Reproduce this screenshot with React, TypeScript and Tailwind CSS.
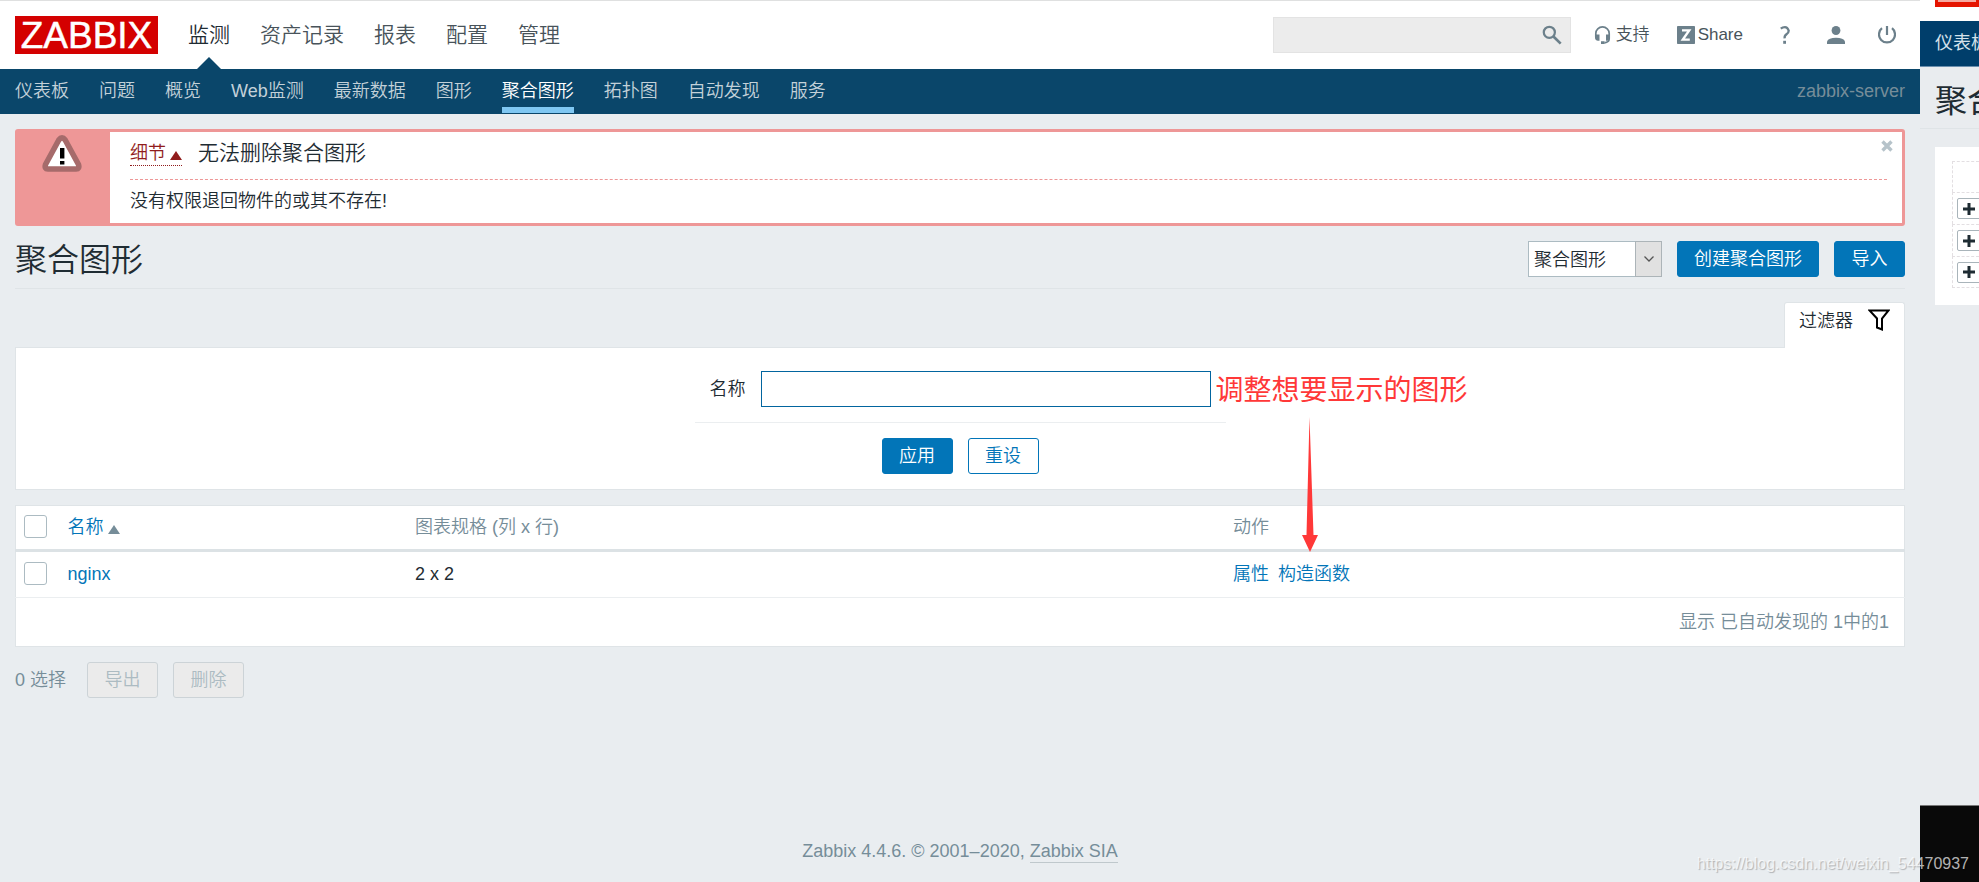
import type { ReactNode } from 'react';

const mainMenu = ['监测', '资产记录', '报表', '配置', '管理'];
const subMenu = ['仪表板', '问题', '概览', 'Web监测', '最新数据', '图形', '聚合图形', '拓扑图', '自动发现', '服务'];

function Primary({ children }: { children: ReactNode }) {
  return (
    <button className="h-9 min-w-[71px] rounded-[3px] border border-[#0275b8] bg-[#0275b8] px-4 text-white">{children}</button>
  );
}

function Icon({ children, size = 'size-[18px]' }: { children: ReactNode; size?: string }) {
  return (
    <svg viewBox="0 0 18 18" className={`${size} shrink-0`} fill="none" aria-hidden="true">
      {children}
    </svg>
  );
}

function Header() {
  return (
    <header>
      <div className="flex h-[69px] items-center border-t border-[#dfe0e0] bg-white pb-px pl-[15px] pr-6 text-[#48535a]">
        <a href="#" aria-label="ZABBIX" className="flex h-[38px] w-[143px] shrink-0 items-center justify-center bg-[#d40000]">
          <svg viewBox="0 0 143 38" className="h-[38px] w-[143px] overflow-visible" aria-hidden="true">
            <text x="71.5" y="32" textAnchor="middle" fontSize="37" fill="#fff" stroke="#fff" strokeWidth="0.5" fontFamily="Liberation Sans, sans-serif">ZABBIX</text>
          </svg>
        </a>
        <nav className="flex h-full gap-[30px] pl-[30px] text-[21px]">
          {mainMenu.map((m, i) => (
            <a key={m} href="#" className={i === 0 ? 'relative flex items-center text-[#1f2c33]' : 'flex items-center'}>
              {m}
              {i === 0 && (
                <span className="absolute -bottom-px left-1/2 -translate-x-1/2 border-x-[12px] border-b-[12px] border-x-transparent border-b-[#0a466a]" />
              )}
            </a>
          ))}
        </nav>
        <div className="ml-auto flex items-center text-[17px]">
          <div className="flex h-9 w-[298px] items-center border border-[#e3e3e3] bg-[#ececec] pr-2">
            <input aria-label="搜索" className="min-w-0 flex-1 bg-transparent px-2 outline-none" />
            <button aria-label="搜索">
              <Icon size="size-5">
                <circle cx="6.6" cy="6.6" r="5" stroke="#6c808b" strokeWidth="2" />
                <path d="m10.300 10.300 6.500 6.500" stroke="#6c808b" strokeWidth="2.400" />
              </Icon>
            </button>
          </div>
          <a href="#" className="ml-[23px] flex items-center gap-1">
            <Icon>
              <path d="M1.800 11V7.500a6.600 6.500 0 0 1 13.400 0V12.500q0 3.800-4.700 4.300" stroke="#6c808b" strokeWidth="1.700" />
              <path d="M1 8.500h4.500v6.200H4q-3-.4-3-3zM16 8.500h-4v6.200h1q3-.4 3-3zM7 15.200h3.600v2.800H7z" fill="#6c808b" />
            </Icon>
            支持
          </a>
          <a href="#" className="ml-[27px] flex items-center gap-[3px]">
            <Icon>
              <rect width="18" height="18" rx="0.800" fill="#6c808b" />
              <path d="M5 4.400h7.200L5.800 13.600h7" stroke="#fff" strokeWidth="2.400" />
            </Icon>
            Share
          </a>
          <a href="#" aria-label="帮助" className="ml-[33px]">
            <Icon>
              <path d="M4.800 2.600Q6.500 1.200 9 1.200t3.700 3.500Q12.700 6.800 10.500 8.300T8.600 12.300" stroke="#6c808b" strokeWidth="2.300" />
              <path d="M7.200 14.800h2.800v3H7.200z" fill="#6c808b" />
            </Icon>
          </a>
          <a href="#" aria-label="用户" className="ml-[33px]">
            <Icon>
              <ellipse cx="9" cy="4.500" rx="4.400" ry="4.500" fill="#6c808b" />
              <path d="M0 18v-2.500Q1.500 11.800 9 11.800t9 3.700V18z" fill="#6c808b" />
            </Icon>
          </a>
          <a href="#" aria-label="退出" className="ml-[33px]">
            <Icon>
              <path d="M9 0v9M4 2.200a8 8 0 1 0 10 0" stroke="#6c808b" strokeWidth="2.200" />
            </Icon>
          </a>
        </div>
      </div>
      <nav className="flex h-[45px] items-stretch gap-[30px] bg-[#0a466a] px-[15px] text-[#c3d1d9]">
        {subMenu.map((m) => (
          <a
            key={m}
            href="#"
            className={
              m === '聚合图形'
                ? 'mb-px flex items-center border-b-[6px] border-[#7fc7f2] pt-[6px] text-white'
                : 'flex items-center'
            }
          >
            {m}
          </a>
        ))}
        <span className="ml-auto flex items-center text-[#768d99]">zabbix-server</span>
      </nav>
    </header>
  );
}

function Message() {
  return (
    <section className="flex h-[97px] rounded-[3px] border-[3px] border-[#ee9797] bg-white">
      <div className="flex w-[92px] shrink-0 justify-center bg-[#ee9797] pr-1 pt-[3px]">
        <svg viewBox="0 0 40 37" className="h-[37px] w-10" aria-hidden="true">
          <path
            d="M16.800 5Q20 .8 23.200 5L36.500 29.500Q37.800 33.800 34 34H6Q2.200 33.800 3.500 29.500z"
            fill="#fff"
            stroke="#a66b6b"
            strokeWidth="5.600"
            strokeLinejoin="round"
          />
          <path d="M18 13h4.400v10.500H18zM18 26h4.400v3.500H18z" fill="#000" />
        </svg>
      </div>
      <div className="relative min-w-0 flex-1 px-5 pr-[15px]">
        <div className="flex h-12 items-center gap-4 border-b border-dashed border-[#ee9797] pb-[6px]">
          <button className="flex items-center gap-1 border-b border-dotted border-[#911c1c] pt-[2px] leading-[23px] text-[#911c1c]">
            细节
            <span className="mt-1 border-x-[6px] border-b-[9px] border-x-transparent border-b-[#911c1c]" />
          </button>
          <span className="text-[21px]">无法删除聚合图形</span>
        </div>
        <p className="pt-2">没有权限退回物件的或其不存在!</p>
        <button aria-label="关闭" className="absolute right-[9px] top-2">
          <svg viewBox="0 0 12 12" className="size-3" aria-hidden="true">
            <path d="m1.500 1.500 9 9m0-9-9 9" stroke="#b6c3ca" strokeWidth="3.400" />
          </svg>
        </button>
      </div>
    </section>
  );
}

function Check({ label }: { label: string }) {
  return (
    <input
      type="checkbox"
      aria-label={label}
      className="mb-[2px] block size-[23px] appearance-none rounded-[3px] border border-[#acbbc2] bg-white"
    />
  );
}

function NextWindow() {
  return (
    <aside className="flex w-[59px] shrink-0 flex-col overflow-hidden whitespace-nowrap bg-[#e9ecef]">
      <div className="h-[21px] bg-white pl-[15px]">
        <div className="h-[7px] bg-[#e51400] px-[3px]">
          <div className="h-0.5 bg-[#f5a9a0]" />
        </div>
      </div>
      <div className="flex h-[46px] items-center border-b border-[#6b8fae] bg-[#003e6b] pl-[15px] font-normal text-[#d5e1ea]">仪表板</div>
      <div className="flex h-[62px] items-center border-b border-[#dfe4e7] pl-[15px] pt-2 text-[32px] font-normal">聚合图形</div>
      <div className="ml-[15px] mt-[18px] h-[158px] bg-white pl-[17px] pt-[14px]">
        <div className="h-[31px] border-l border-t border-dashed border-[#e3dfe2]" />
        {[1, 2, 3].map((n) => (
          <div key={n} className="flex h-8 items-center border-l border-t border-dashed border-[#e3dfe2] pl-1 last:border-b">
            <button aria-label="添加" className="flex h-[21px] w-[26px] shrink-0 items-center rounded-[2px] border border-[#a9b4ba] bg-white pl-[5px]">
              <svg viewBox="0 0 12 12" className="size-3" aria-hidden="true">
                <path d="M6 0v12M0 6h12" stroke="#1f2c33" strokeWidth="3" />
              </svg>
            </button>
          </div>
        ))}
      </div>
      <div className="mt-auto h-[77px] border-t border-[#777] bg-[#090909]" />
    </aside>
  );
}

export default function App() {
  return (
    <div className="relative flex min-h-screen bg-[#e9edf0] font-['Liberation_Sans','Noto_Sans_CJK_SC',sans-serif] text-[18px] font-[350] leading-[27px] text-[#1f2c33]">
      <div className="flex min-w-0 flex-1 flex-col">
        <Header />
        <main className="px-[15px] pt-[15px]">
          <Message />
          <div className="flex h-[63px] items-center justify-between border-b border-[#dfe4e7] pb-1 pt-2">
            <h1 className="pt-[2px] text-[32px] font-[350]">聚合图形</h1>
            <div className="flex gap-[15px]">
              <div className="relative">
                <select aria-label="视图" className="h-9 w-[134px] appearance-none border border-[#acbbc2] bg-white pl-[5px] pt-[3px]">
                  <option>聚合图形</option>
                </select>
                <span className="pointer-events-none absolute inset-y-0 right-0 flex w-[27px] items-center justify-center border border-[#acb4b8] bg-[#e1e1e1]">
                  <svg viewBox="0 0 10 6" className="h-[6px] w-[10px]" fill="none" aria-hidden="true">
                    <path d="m.5.5 4.500 4.500 4.500-4.500" stroke="#555" strokeWidth="1.300" />
                  </svg>
                </span>
              </div>
              <Primary>创建聚合图形</Primary>
              <Primary>导入</Primary>
            </div>
          </div>

          <div className="mt-[13px] flex justify-end">
            <button className="relative z-10 -mb-px flex h-[46px] items-start gap-[15px] rounded-t-[3px] border border-b-0 border-[#dfe4e7] bg-white px-[14px] pt-[5px]">
              过滤器
              <svg viewBox="0 0 22 22" className="mt-px size-[22px]" fill="none" aria-hidden="true">
                <path d="M1.500 1.500h19L14 9.500v11l-5-2v-9z" stroke="#000" strokeWidth="2" />
              </svg>
            </button>
          </div>
          <form className="relative flex h-[143px] flex-col items-center border border-[#dfe4e7] bg-white pt-[23px]">
            <div className="flex flex-col items-center">
              <div className="relative flex items-center gap-[15px] border-b border-[#ebeef0] px-[15px] pb-[15px]">
                <label htmlFor="name">名称</label>
                <input id="name" className="h-9 w-[450px] border border-[#02659f] bg-white px-2 outline-none" />
                <span className="absolute left-full top-0 -ml-[10px] whitespace-nowrap text-[28px] font-normal leading-10 text-[#ff3838]">
                  调整想要显示的图形
                </span>
                <svg viewBox="0 0 16 135" className="absolute left-full top-[46px] z-20 ml-[76px] h-[135px] w-4" aria-hidden="true">
                  <path d="M7.500 0 11.500 118H16L8 135 0 118h4.500z" fill="#ff3838" />
                </svg>
              </div>
            </div>
            <div className="mt-[15px] flex gap-[15px]">
              <Primary>应用</Primary>
              <button type="reset" className="h-9 min-w-[71px] rounded-[3px] border border-[#0275b8] bg-white px-4 text-[#0275b8]">重设</button>
            </div>
          </form>

          <table className="mt-[15px] w-full table-fixed border border-[#dfe4e7] bg-white text-left">
            <colgroup>
              <col className="w-[42px]" />
              <col className="w-[18.4%]" />
              <col className="w-[43.3%]" />
              <col />
            </colgroup>
            <thead>
              <tr className="h-[45px] border-b-[3px] border-[#dce2e5] text-[#768d99]">
                <th className="pl-2"><Check label="全选" /></th>
                <th className="pl-[10px] font-[350]">
                  <a href="#" className="flex items-center gap-1 text-[#0275b8]">
                    名称
                    <span className="mt-1 border-x-[6px] border-b-[9px] border-x-transparent border-b-[#768d99]" />
                  </a>
                </th>
                <th className="pl-[10px] font-[350]">图表规格 (列 x 行)</th>
                <th className="pl-[10px] font-[350]">动作</th>
              </tr>
            </thead>
            <tbody>
              <tr className="h-[47px] border-b border-[#ebeef0]">
                <td className="pl-2"><Check label="nginx" /></td>
                <td className="pl-[10px]"><a href="#" className="text-[#0275b8]">nginx</a></td>
                <td className="pl-[10px]">2 x 2</td>
                <td className="pl-[10px] text-[#0275b8]">
                  <span className="flex gap-[9px]"><a href="#">属性</a><a href="#">构造函数</a></span>
                </td>
              </tr>
              <tr className="h-[49px]">
                <td colSpan={4} className="pr-[15px] text-right text-[#768d99]">显示 已自动发现的 1中的1</td>
              </tr>
            </tbody>
          </table>

          <div className="mt-[15px] flex items-center gap-[15px] text-[#768d99]">
            <span className="pr-[6px]">0 选择</span>
            <button disabled className="h-9 min-w-[71px] rounded-[3px] border border-[#ccd3d7] bg-[#ebebeb] px-4 text-[#acbbc2]">导出</button>
            <button disabled className="h-9 min-w-[71px] rounded-[3px] border border-[#ccd3d7] bg-[#ebebeb] px-4 text-[#acbbc2]">删除</button>
          </div>
        </main>
        <footer className="mt-auto pb-[17px] text-center text-[#768d99]">
          Zabbix 4.4.6. © 2001–2020,{' '}
          <a href="#" className="inline-block border-b border-[#bfc8cc] leading-[22px]">Zabbix SIA</a>
        </footer>
      </div>
      <NextWindow />
      <span className="absolute bottom-[5px] right-[10px] text-[16px] text-white/70 [text-shadow:1px_1px_1px_rgba(0,0,0,0.25)]">
        https://blog.csdn.net/weixin_54470937
      </span>
    </div>
  );
}
